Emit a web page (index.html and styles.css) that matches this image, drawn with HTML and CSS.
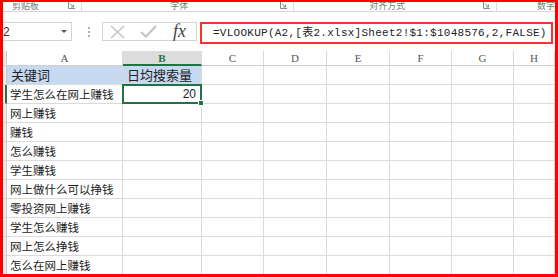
FILE: index.html
```html
<!DOCTYPE html>
<html lang="zh-CN">
<head>
  <meta charset="UTF-8" />
  <title>VLOOKUP 跨表查询</title>
  <link rel="stylesheet" href="styles.css">
</head>
<body>
  <div class="frame">
    <div class="ribbon">
      <div class="group g1">
        <span class="glabel">剪贴板</span>
        <svg class="launcher" width="7" height="7" viewBox="0 0 7 7"><path d="M0.5 0 V6.5 H7" fill="none" stroke="#8a8a8a"/><path d="M2 1.5 L5.5 5 M5.5 2.5 V5 H3" fill="none" stroke="#8a8a8a"/></svg>
      </div>
      <div class="group g2">
        <span class="glabel">字体</span>
        <svg class="launcher" width="7" height="7" viewBox="0 0 7 7"><path d="M0.5 0 V6.5 H7" fill="none" stroke="#8a8a8a"/><path d="M2 1.5 L5.5 5 M5.5 2.5 V5 H3" fill="none" stroke="#8a8a8a"/></svg>
      </div>
      <div class="group g3">
        <span class="glabel">对齐方式</span>
        <svg class="launcher" width="7" height="7" viewBox="0 0 7 7"><path d="M0.5 0 V6.5 H7" fill="none" stroke="#8a8a8a"/><path d="M2 1.5 L5.5 5 M5.5 2.5 V5 H3" fill="none" stroke="#8a8a8a"/></svg>
      </div>
      <div class="group g4">
        <span class="glabel">数字</span>
      </div>
    </div>

    <div class="formulabar">
      <div class="namebox">
        <span class="name">2</span>
        <span class="caret"></span>
      </div>
      <svg class="grip" width="4" height="12" viewBox="0 0 4 12"><circle cx="2" cy="2" r="1" fill="#9a9a9a"/><circle cx="2" cy="6" r="1" fill="#9a9a9a"/><circle cx="2" cy="10" r="1" fill="#9a9a9a"/></svg>
      <div class="fxbox">
        <svg class="cancel" width="15" height="14" viewBox="0 0 15 14"><path d="M1 1 L14 13 M14 1 L1 13" stroke="#c4c4c4" stroke-width="1.6" fill="none"/></svg>
        <svg class="enter" width="17" height="13" viewBox="0 0 17 13"><path d="M1 7 L6 11.5 L16 1" stroke="#c4c4c4" stroke-width="2.2" fill="none"/></svg>
        <span class="fx">fx</span>
      </div>
      <div class="formula">=VLOOKUP(A2,[表2.xlsx]Sheet2!$1:$1048576,2,FALSE)</div>
    </div>

    <div class="sheet">
      <div class="c rh corner"></div>
      <div class="c hd">A</div>
      <div class="c hd sel">B</div>
      <div class="c hd">C</div>
      <div class="c hd">D</div>
      <div class="c hd">E</div>
      <div class="c hd">F</div>
      <div class="c hd">G</div>
      <div class="c hd">H</div>

      <div class="c rh"></div>
      <div class="c key">关键词</div>
      <div class="c key">日均搜索量</div>
      <div class="c"></div><div class="c"></div><div class="c"></div><div class="c"></div><div class="c"></div><div class="c"></div>

      <div class="c rh sel"></div>
      <div class="c">学生怎么在网上赚钱</div>
      <div class="c num active">20</div>
      <div class="c"></div><div class="c"></div><div class="c"></div><div class="c"></div><div class="c"></div><div class="c"></div>

      <div class="c rh"></div>
      <div class="c">网上赚钱</div>
      <div class="c"></div><div class="c"></div><div class="c"></div><div class="c"></div><div class="c"></div><div class="c"></div><div class="c"></div>

      <div class="c rh"></div>
      <div class="c">赚钱</div>
      <div class="c"></div><div class="c"></div><div class="c"></div><div class="c"></div><div class="c"></div><div class="c"></div><div class="c"></div>

      <div class="c rh"></div>
      <div class="c">怎么赚钱</div>
      <div class="c"></div><div class="c"></div><div class="c"></div><div class="c"></div><div class="c"></div><div class="c"></div><div class="c"></div>

      <div class="c rh"></div>
      <div class="c">学生赚钱</div>
      <div class="c"></div><div class="c"></div><div class="c"></div><div class="c"></div><div class="c"></div><div class="c"></div><div class="c"></div>

      <div class="c rh"></div>
      <div class="c">网上做什么可以挣钱</div>
      <div class="c"></div><div class="c"></div><div class="c"></div><div class="c"></div><div class="c"></div><div class="c"></div><div class="c"></div>

      <div class="c rh"></div>
      <div class="c">零投资网上赚钱</div>
      <div class="c"></div><div class="c"></div><div class="c"></div><div class="c"></div><div class="c"></div><div class="c"></div><div class="c"></div>

      <div class="c rh"></div>
      <div class="c">学生怎么赚钱</div>
      <div class="c"></div><div class="c"></div><div class="c"></div><div class="c"></div><div class="c"></div><div class="c"></div><div class="c"></div>

      <div class="c rh"></div>
      <div class="c">网上怎么挣钱</div>
      <div class="c"></div><div class="c"></div><div class="c"></div><div class="c"></div><div class="c"></div><div class="c"></div><div class="c"></div>

      <div class="c rh"></div>
      <div class="c">怎么在网上赚钱</div>
      <div class="c"></div><div class="c"></div><div class="c"></div><div class="c"></div><div class="c"></div><div class="c"></div><div class="c"></div>
    </div>
  </div>
</body>
</html>
```

FILE: styles.css
```css
body {
  margin: 0;
  background: #ffffff;
  font-family: "Noto Sans CJK SC", "Liberation Sans", sans-serif;
}

.frame {
  width: 558px;
  height: 277px;
  box-sizing: border-box;
  border: 3px solid #ff0000;
  border-top-width: 2px;
  overflow: hidden;
  background: #ffffff;
}

/* ribbon group captions, the bottom strip of the ribbon */
.ribbon {
  display: flex;
  height: 9px;
  border-bottom: 1px solid #d5d5d5;
  overflow: hidden;
}

.group {
  display: flex;
  align-items: flex-start;
  box-sizing: border-box;
  border-right: 1px solid #dcdcdc;
}

.glabel {
  font-size: 9px;
  line-height: 9px;
  margin-top: -1px;
  color: #7a7a7a;
  white-space: nowrap;
}

.launcher {
  margin-left: auto;
  margin-right: 6px;
  margin-top: 0;
}

.g1 { width: 82px; padding-left: 9px; }
.g2 { width: 217px; padding-left: 88px; }
.g3 { width: 208px; padding-left: 75px; }
.g4 { flex: 1; padding-left: 40px; border-right: none; }

/* formula bar */
.formulabar {
  display: flex;
  align-items: flex-start;
  height: 39px;
  box-sizing: border-box;
  padding-top: 10px;
}

.namebox {
  width: 69px;
  height: 19px;
  box-sizing: border-box;
  border: 1px solid #d4d4d4;
  border-left: none;
  display: flex;
  align-items: center;
}

.name {
  font: 12px "Liberation Sans", sans-serif;
  color: #333;
}

.caret {
  margin-left: auto;
  margin-right: 4px;
  width: 0;
  height: 0;
  border-left: 3px solid transparent;
  border-right: 3px solid transparent;
  border-top: 3px solid #555;
}

.grip {
  margin-left: 15px;
  margin-top: 4px;
}

.fxbox {
  margin-left: 11px;
  width: 95px;
  height: 19px;
  box-sizing: border-box;
  border: 1px solid #d4d4d4;
  display: flex;
  align-items: center;
}

.cancel { margin-left: 7px; }
.enter { margin-left: 15px; }

.fx {
  margin-left: 16px;
  font: italic 18px "Liberation Serif", serif;
  line-height: 17px;
  color: #444;
}

.formula {
  margin-left: 3px;
  width: 353px;
  height: 22px;
  box-sizing: border-box;
  border: 2px solid #ff3030;
  padding-left: 11px;
  font: 11px "Liberation Mono", "Noto Sans CJK SC", monospace;
  letter-spacing: 0.26px;
  line-height: 18px;
  color: #222;
  white-space: nowrap;
  overflow: hidden;
}

/* worksheet grid */
.sheet {
  display: grid;
  grid-template-columns: 4px 116px 79px 62px 63px 63px 62px 62px 41px;
  grid-template-rows: 15px repeat(11, 19px);
}

.c {
  box-sizing: border-box;
  border-right: 1px solid #dadada;
  border-bottom: 1px solid #dadada;
  padding-left: 3px;
  font-size: 11.5px;
  line-height: 18px;
  color: #222;
  white-space: nowrap;
}

.hd {
  padding-left: 0;
  text-align: center;
  font: 11px "Liberation Serif", serif;
  line-height: 14px;
  color: #555;
  border-bottom-color: #cfcfcf;
}

.hd.sel {
  background: #dcdcdc;
  color: #217346;
  font-weight: bold;
  border-bottom: 2px solid #217346;
}

.rh {
  padding-left: 0;
  background: #f0f0f0;
  border-right-color: #c8c8c8;
}

.rh.sel {
  border-right: 2px solid #217346;
}

.key {
  background: #c5d9f1;
  font-size: 13px;
  padding-left: 4px;
}

.num {
  text-align: right;
  padding-right: 5px;
  font: 12px "Liberation Sans", sans-serif;
  line-height: 18px;
}

.active {
  position: relative;
}

.active::after {
  content: "";
  position: absolute;
  left: -1px;
  top: -1px;
  right: -1px;
  bottom: -1px;
  border: 2px solid #217346;
}

.active::before {
  content: "";
  position: absolute;
  right: -3px;
  bottom: -3px;
  width: 4px;
  height: 4px;
  background: #217346;
  border: 1px solid #ffffff;
  z-index: 1;
}
```
